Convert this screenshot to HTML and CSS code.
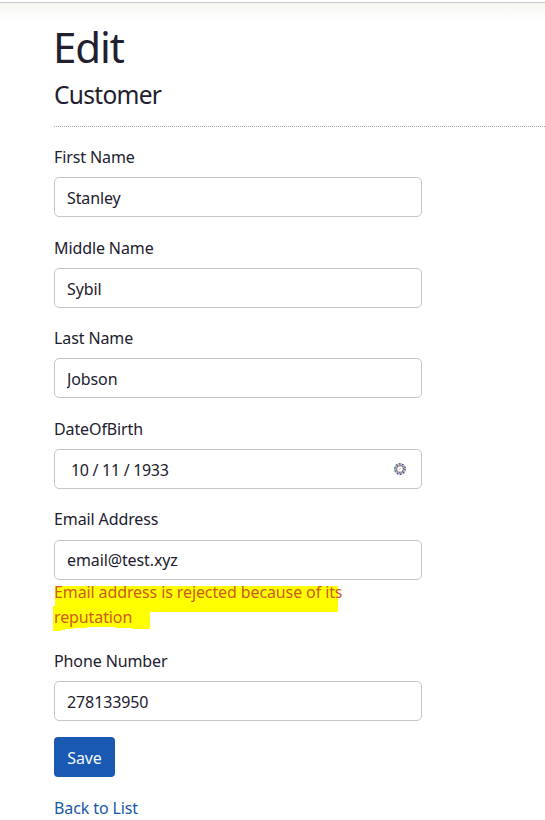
FILE: index.html
```
<!DOCTYPE html>
<html lang="en">
<head>
<meta charset="utf-8">
<title>Edit Customer</title>
<link rel="stylesheet" href="styles.css">
</head>
<body>
<header class="topbar"></header>
<main class="page">
  <h1><span>Edit</span></h1>
  <h4><span>Customer</span></h4>
  <hr>
  <form class="form">
    <div class="group"><label for="first">First Name</label><input id="first" type="text" value="Stanley"></div>
    <div class="group"><label for="middle">Middle Name</label><input id="middle" type="text" value="Sybil"></div>
    <div class="group"><label for="last">Last Name</label><input id="last" type="text" value="Jobson"></div>
    <div class="group"><label>DateOfBirth</label>
      <div class="control date"><span class="value">10 / 11 / 1933</span>
        <svg class="picker" viewBox="0 0 12 12" aria-hidden="true">
          <circle cx="6" cy="6" r="4.3" fill="none" stroke="#c4c0bd" stroke-width="3.4"/>
          <circle cx="6" cy="6" r="5.2" fill="none" stroke="#2f5fb0" stroke-width="1.4" stroke-dasharray="1.4 1.87"/>
          <circle cx="6" cy="6" r="3.6" fill="none" stroke="#d0704a" stroke-width="1.3" stroke-dasharray="1.3 2.47"/>
          <circle cx="6" cy="6" r="3.6" fill="none" stroke="#2f5fb0" stroke-width="1.2" stroke-dasharray="1 2.77" stroke-dashoffset="1.8"/>
          <path d="M5 7l2-2" stroke="#c4c0bd"/>
        </svg>
      </div>
    </div>
    <div class="group"><label for="email">Email Address</label><input id="email" type="text" value="email@test.xyz">
      <div class="error">
        <svg class="marker" viewBox="0 0 290 52" aria-hidden="true"><path d="M2 6H285V32H97V49H79V48H62V47H34V48H20V49H12V50H8V51H0V26H2Z" fill="#ffff00"/></svg>
        <span>Email address is rejected because of its<br>reputation</span>
      </div>
    </div>
    <div class="group"><label for="phone">Phone Number</label><input id="phone" type="text" value="278133950"></div>
    <button class="save" type="button">Save</button>
  </form>
  <a class="back" href="#">Back to List</a>
</main>
</body>
</html>
```
FILE: styles.css
```
* { box-sizing: border-box; }
html { overflow: hidden; }
body {
  margin: 0;
  background: #fff;
  color: #22202e;
  font: 16px/25px "Noto Sans", "Open Sans", sans-serif;
  letter-spacing: -0.11px;
}
.topbar {
  height: 18px;
  border-top: 1px solid #c8c8c8;
  background: linear-gradient(#f6f7f0, #fff);
  margin-top: 2px;
}
.page { padding-left: 54px; }
h1, h4 { margin: 0; font-weight: 400; }
h1 { height: 60px; font-size: 42px; line-height: 53px; letter-spacing: -1.1px; text-indent: -1px; }
h4 { height: 30px; font-size: 24.5px; line-height: 30px; letter-spacing: -0.7px; }
hr { margin: 16px 0 17.7px; border: 0; border-top: 1px dotted #a8a8a4; }
.form { width: 368px; }
.group { margin-bottom: 18.1px; }
.group:last-of-type { margin-bottom: 16px; }
label { display: block; height: 32.5px; padding-top: 0.25px; }
input, .control {
  display: block;
  width: 100%;
  height: 40px;
  padding: 1.6px 12px 0;
  border: 1px solid #c6c6c6;
  border-radius: 5px;
  background: #fff;
  color: inherit;
  font: inherit;
  letter-spacing: inherit;
  outline: 0;
}
.date { display: flex; align-items: center; justify-content: space-between; padding: 1px 15px 0 16px; }
.value { padding-top: 1.5px; letter-spacing: -0.3px; }
.picker { width: 12px; height: 12px; }
.error { position: relative; height: 51px; color: #ce5a20; white-space: nowrap; }
.error span { position: relative; top: 0.8px; }
.marker { position: absolute; left: -1px; top: 0; width: 290px; height: 52px; }
.save {
  display: block;
  width: 61px;
  height: 40px;
  padding: 2.4px 0 0;
  border: 0;
  border-radius: 4px;
  background: #1958b3;
  color: #f4f8fb;
  font: inherit;
  letter-spacing: inherit;
}
.back { display: block; width: max-content; margin-top: 19px; color: #1958a5; text-decoration: none; }
```
